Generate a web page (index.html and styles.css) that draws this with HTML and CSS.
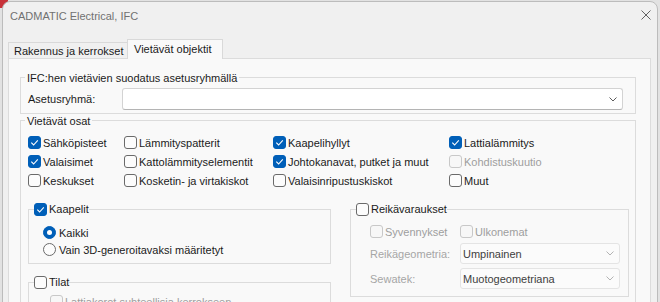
FILE: index.html
```html
<!DOCTYPE html>
<html lang="fi">
<head>
    <meta charset="UTF-8">
    <title>CADMATIC Electrical, IFC</title>
    <link rel="stylesheet" href="styles.css">
</head>
<body>
    <div class="window">
        <div class="titlebar">
            <span class="title">CADMATIC Electrical, IFC</span>
            <svg class="close" width="10" height="10" viewBox="0 0 10 10"><path d="M0.5 0.5L9.5 9.5M9.5 0.5L0.5 9.5" stroke="#616161" stroke-width="1" fill="none"/></svg>
        </div>

        <div class="tabs">
            <div class="tab">Rakennus ja kerrokset</div>
            <div class="tab active">Vietävät objektit</div>
        </div>

        <div class="panel">
            <!-- suodatus -->
            <fieldset class="group group-filter">
                <legend>IFC:hen vietävien suodatus asetusryhmällä</legend>
                <div class="field">
                    <span class="field-label">Asetusryhmä:</span>
                    <div class="combo combo-main">
                        <span class="combo-text"></span>
                        <svg width="8" height="5" viewBox="0 0 8 5"><path d="M0.5 0.5L4 4L7.5 0.5" stroke="#5c5c5c" fill="none"/></svg>
                    </div>
                </div>
            </fieldset>

            <!-- osat -->
            <fieldset class="group group-parts">
                <legend>Vietävät osat</legend>
                <div class="check-grid">
                    <label class="check"><span class="box checked"><svg viewBox="0 0 13 13"><path d="M3.3 6.7L5.6 9L9.8 4.4" stroke="#fff" stroke-width="1.1" fill="none"/></svg></span>Sähköpisteet</label>
                    <label class="check"><span class="box"></span>Lämmityspatterit</label>
                    <label class="check"><span class="box checked"><svg viewBox="0 0 13 13"><path d="M3.3 6.7L5.6 9L9.8 4.4" stroke="#fff" stroke-width="1.1" fill="none"/></svg></span>Kaapelihyllyt</label>
                    <label class="check"><span class="box checked"><svg viewBox="0 0 13 13"><path d="M3.3 6.7L5.6 9L9.8 4.4" stroke="#fff" stroke-width="1.1" fill="none"/></svg></span>Lattialämmitys</label>

                    <label class="check"><span class="box checked"><svg viewBox="0 0 13 13"><path d="M3.3 6.7L5.6 9L9.8 4.4" stroke="#fff" stroke-width="1.1" fill="none"/></svg></span>Valaisimet</label>
                    <label class="check"><span class="box"></span>Kattolämmityselementit</label>
                    <label class="check"><span class="box checked"><svg viewBox="0 0 13 13"><path d="M3.3 6.7L5.6 9L9.8 4.4" stroke="#fff" stroke-width="1.1" fill="none"/></svg></span>Johtokanavat, putket ja muut</label>
                    <label class="check disabled"><span class="box"></span>Kohdistuskuutio</label>

                    <label class="check"><span class="box"></span>Keskukset</label>
                    <label class="check"><span class="box"></span>Kosketin- ja virtakiskot</label>
                    <label class="check"><span class="box"></span>Valaisinripustuskiskot</label>
                    <label class="check"><span class="box"></span>Muut</label>
                </div>

                <div class="subgroups">
                    <div class="subcol">
                        <fieldset class="group sub sub-cables">
                            <legend class="legend-check"><span class="box checked"><svg viewBox="0 0 13 13"><path d="M3.3 6.7L5.6 9L9.8 4.4" stroke="#fff" stroke-width="1.1" fill="none"/></svg></span>Kaapelit</legend>
                            <div class="radios">
                                <label class="radio"><span class="dot on"></span>Kaikki</label>
                                <label class="radio"><span class="dot"></span>Vain 3D-generoitavaksi määritetyt</label>
                            </div>
                        </fieldset>

                        <fieldset class="group sub sub-spaces">
                            <legend class="legend-check"><span class="box"></span>Tilat</legend>
                            <label class="check disabled spaces-row"><span class="box"></span>Lattiakorot suhteellisia kerrokseen</label>
                        </fieldset>
                    </div>

                    <fieldset class="group sub sub-holes">
                        <legend class="legend-check"><span class="box"></span>Reikävaraukset</legend>
                        <div class="hole-row first">
                            <label class="check disabled"><span class="box"></span>Syvennykset</label>
                            <label class="check disabled"><span class="box"></span>Ulkonemat</label>
                        </div>
                        <div class="hole-row second">
                            <span class="muted">Reikägeometria:</span>
                            <div class="combo combo-off">
                                <span class="combo-text">Umpinainen</span>
                                <svg width="8" height="5" viewBox="0 0 8 5"><path d="M0.5 0.5L4 4L7.5 0.5" stroke="#b3b3b3" fill="none"/></svg>
                            </div>
                        </div>
                        <div class="hole-row third">
                            <span class="muted">Sewatek:</span>
                            <div class="combo combo-off">
                                <span class="combo-text">Muotogeometriana</span>
                                <svg width="8" height="5" viewBox="0 0 8 5"><path d="M0.5 0.5L4 4L7.5 0.5" stroke="#b3b3b3" fill="none"/></svg>
                            </div>
                        </div>
                    </fieldset>
                </div>
            </fieldset>
        </div>
    </div>
</body>
</html>
```

FILE: styles.css
```css
*{
    padding: 0;
    margin: 0;
    box-sizing: border-box;
}

body{
    position: relative;
    height: 302px;
    overflow: hidden;
    background: #e2e2e2;
    font-family: "Liberation Sans", Arial, sans-serif;
    font-size: 11px;
    color: #1b1b1b;
}

/* kulma taustalla olevasta ikkunasta */
body::before{
    content: "";
    position: absolute;
    left: 0;
    top: 0;
    width: 8px;
    height: 8px;
    background: #c8323a;
}

.window{
    position: relative;
    width: 656px;
    height: 330px;
    margin: 1px 0 0 2px;
    background: #f0f0f0;
    border: 1px solid #bcbcbc;
    border-radius: 8px 8px 0 0;
}

.titlebar{
    height: 37px;
    display: flex;
    justify-content: space-between;
    align-items: flex-start;
    padding: 6px 6px 0 7px;
}

.title{
    line-height: 16px;
    color: #717171;
}

.close{
    margin-top: 2px;
}

/* tabs */
.tabs{
    height: 19px;
    display: flex;
    align-items: flex-end;
    padding-left: 5px;
    white-space: nowrap;
}

.tab{
    width: 120px;
    height: 16px;
    padding: 1px 5px 0;
    line-height: 15px;
    background: #f0f0f0;
    border: 1px solid #d9d9d9;
    border-bottom: none;
}

.tab.active{
    position: relative;
    z-index: 1;
    width: 96px;
    height: 20px;
    margin-left: -1px;
    margin-bottom: -1px;
    padding: 1px 0 0 6px;
    line-height: 16px;
    background: #f9f9f9;
}

.panel{
    width: 643px;
    height: 260px;
    margin-left: 5px;
    padding: 9px 14px 0 11px;
    background: #f9f9f9;
    border: 1px solid #dcdcdc;
}

/* group boxes */
.group{
    border: 1px solid #dcdcdc;
    min-width: 0;
}

.group > legend{
    margin-left: -3px;
    padding: 3px 2px 0;
    line-height: 15px;
}

.group-filter{
    width: 616px;
    padding: 2px 12px 3px 7px;
}

.field{
    display: flex;
    align-items: center;
}

.field-label{
    width: 94px;
}

.combo{
    display: flex;
    align-items: center;
    justify-content: space-between;
    border: 1px solid #d3d3d3;
    border-radius: 3px;
    padding: 0 5px 0 2px;
}

.combo-main{
    width: 501px;
    height: 22px;
    background: #fff;
    border-bottom-color: #b4b4b4;
}

.combo-off{
    width: 160px;
    height: 21px;
    background: #fbfbfb;
    border-color: #e4e4e4;
    color: #3e3e3e;
}

.group-parts{
    width: 616px;
    height: 200px;
    margin-top: -3px;
    padding: 2px 6px 0 7px;
}

/* checkboxes */
.check-grid{
    display: grid;
    grid-template-columns: 96px 149px 176px 1fr;
    grid-auto-rows: 19px;
    padding-top: 2px;
}

.check,
.radio{
    display: flex;
    align-items: center;
    white-space: nowrap;
}

.box{
    width: 13px;
    height: 13px;
    margin-right: 2px;
    flex: none;
    border: 1px solid #6a6a6a;
    border-radius: 3px;
    background: #fcfcfc;
}

.box svg{
    display: block;
    width: 13px;
    height: 13px;
    margin: -1px;
}

.box.checked{
    background: #005fb8;
    border-color: #005fb8;
}

.check.disabled{
    color: #9e9e9e;
}

.check.disabled .box{
    border-color: #c8c8c8;
    background: #f7f7f7;
}

.subgroups{
    display: flex;
    align-items: flex-start;
    gap: 19px;
    margin-top: 11px;
}

.subcol{
    width: 303px;
}

.sub > legend.legend-check{
    display: flex;
    align-items: center;
    height: 16px;
    margin-left: 0;
    padding: 0;
}

.sub-cables{
    padding: 7px 6px 5px 5px;
}

.sub-cables > legend{
    padding-right: 20px;
}

.radios{
    margin-left: 9px;
}

.radio{
    height: 17px;
}

.dot{
    width: 13px;
    height: 13px;
    margin-right: 3px;
    border: 1px solid #6a6a6a;
    border-radius: 50%;
    background: #fcfcfc;
    display: flex;
    align-items: center;
    justify-content: center;
}

.dot.on{
    background: #005fb8;
    border-color: #005fb8;
}

.dot.on::after{
    content: "";
    width: 5px;
    height: 5px;
    border-radius: 50%;
    background: #fff;
}

.sub-spaces{
    margin-top: 10px;
    height: 60px;
    padding: 3px 6px 0 5px;
}

.sub-spaces > legend{
    padding-right: 7px;
}

.spaces-row{
    height: 17px;
    margin-left: 16px;
}

.sub-holes{
    width: 279px;
    padding: 6px 7px 7px 5px;
}

.sub-holes > legend{
    padding-right: 10px;
}

.hole-row{
    display: grid;
    grid-template-columns: 90px 160px;
    align-items: center;
    margin-left: 14px;
}

.hole-row.first{
    height: 17px;
}

.hole-row.second{
    margin-top: 3px;
}

.hole-row.third{
    margin-top: 4px;
}

.muted{
    color: #a6a6a6;
}
```
